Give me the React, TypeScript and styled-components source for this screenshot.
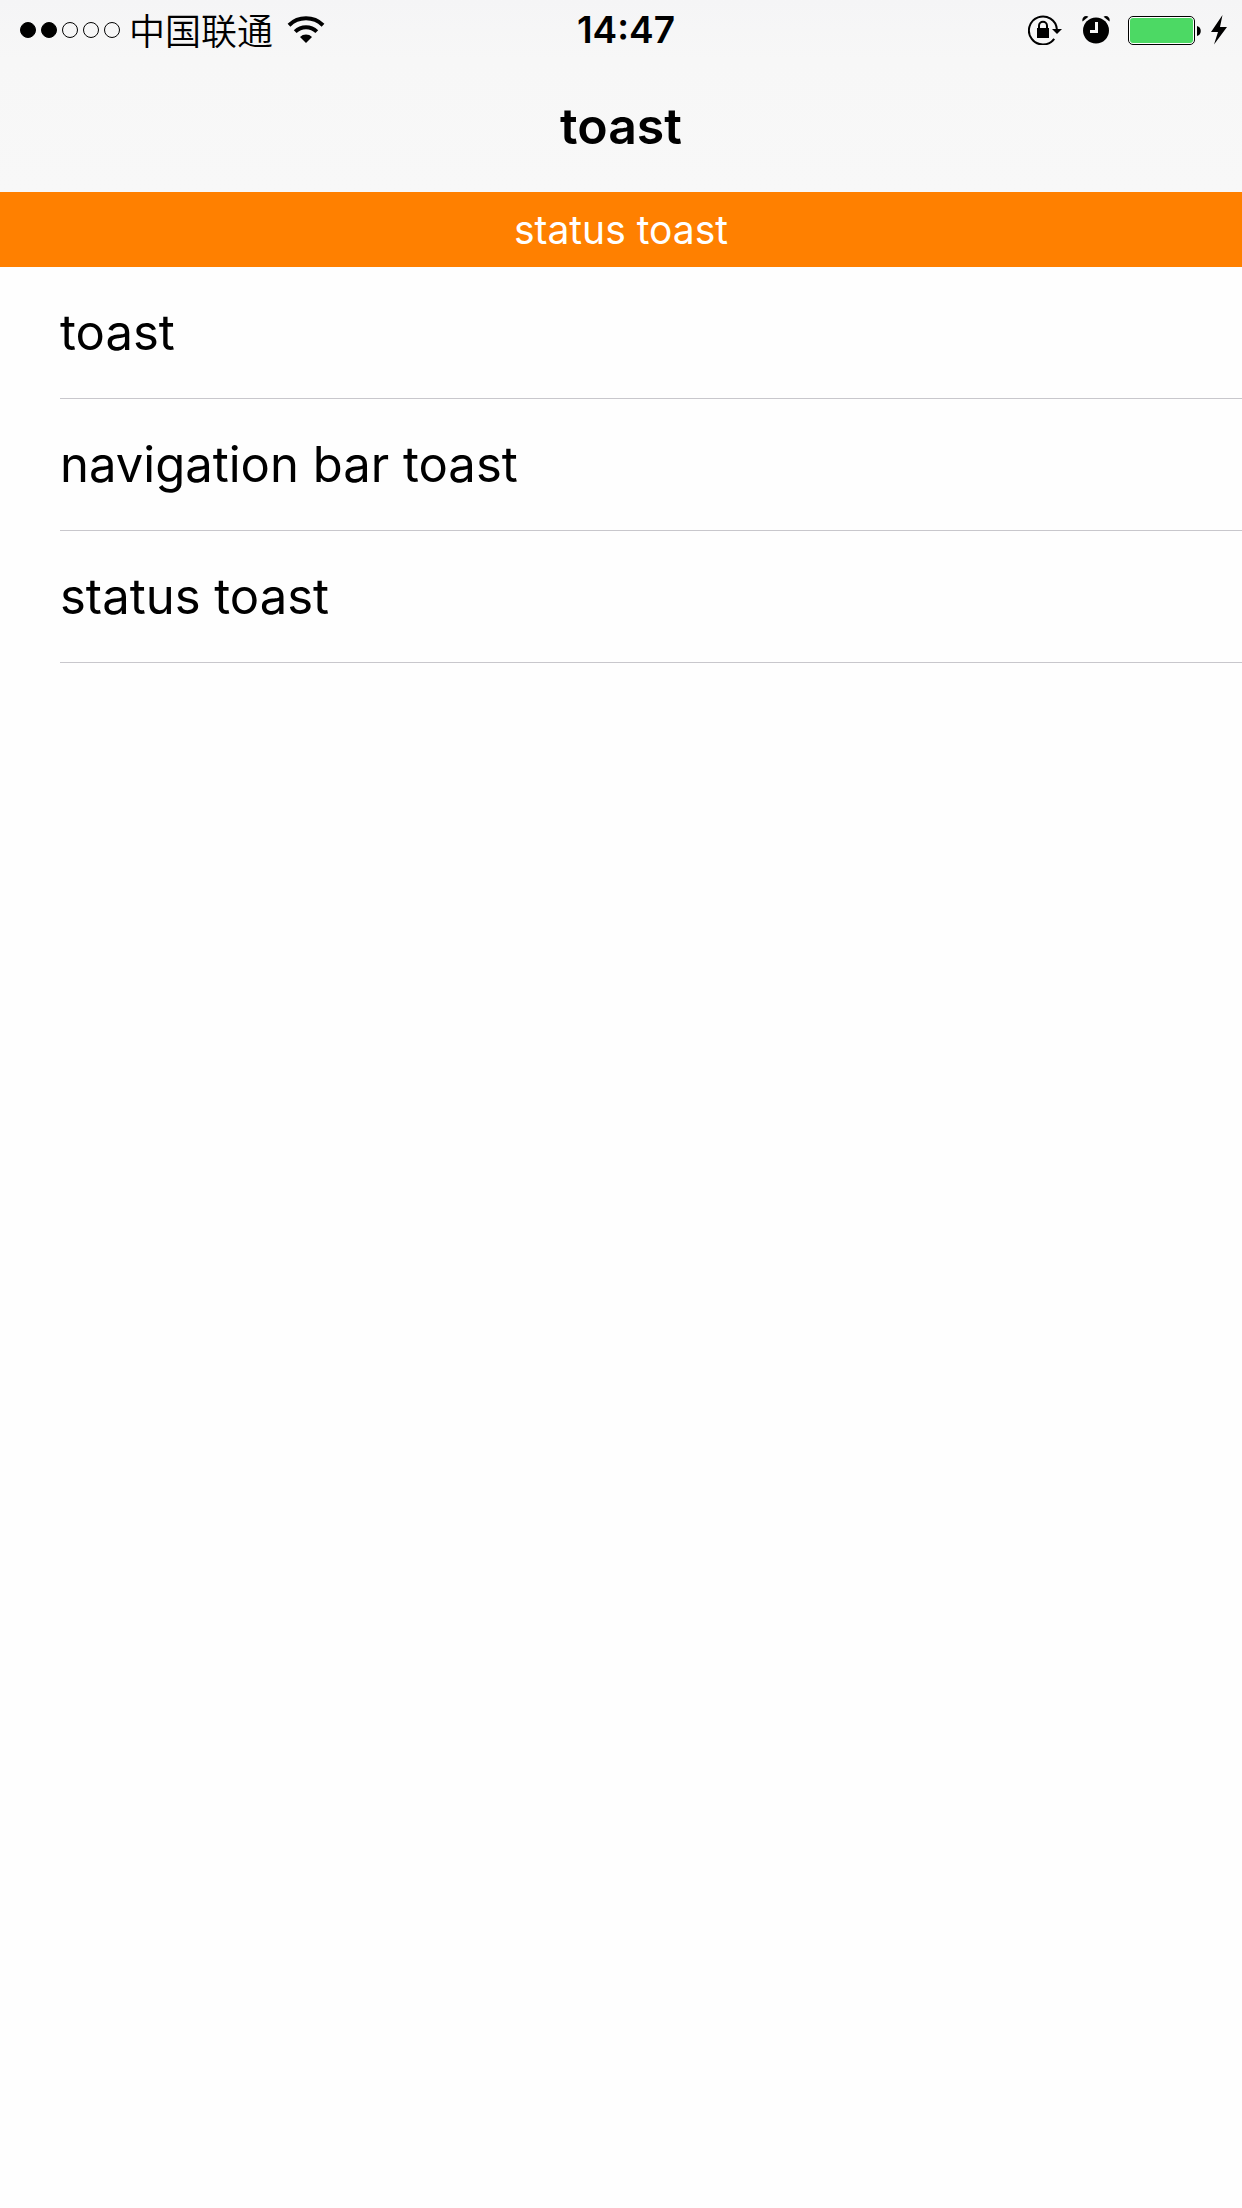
import React from "react";
import styled, { createGlobalStyle } from "styled-components";

const GlobalStyle = createGlobalStyle`
  *, *::before, *::after { box-sizing: border-box; }
  body {
    margin: 0;
    background: #fefefe;
    color: #000;
    font-family: Inter, "Noto Sans CJK SC", sans-serif;
  }
`;

const Header = styled.header`
  background: linear-gradient(#f5f5f6, #f7f7f7 60px, #f8f8f8);
`;

const StatusBar = styled.div`
  display: grid;
  grid-template-columns: 1fr auto 1fr;
  align-items: center;
  height: 60px;
  padding: 0 10px 0 20px;
`;

const StatusGroup = styled.div<{ $end?: boolean }>`
  display: flex;
  align-items: center;
  justify-content: ${(p) => (p.$end ? "flex-end" : "flex-start")};
`;

const Signal = styled.div`
  display: flex;
  gap: 5px;
  margin-right: 9px;
`;

const Dot = styled.span<{ $filled: boolean }>`
  width: 16px;
  height: 16px;
  border: 1px solid #000;
  border-radius: 50%;
  background: ${(p) => (p.$filled ? "#000" : "transparent")};
`;

const Carrier = styled.span`
  font-family: "Noto Sans CJK SC", sans-serif;
  font-size: 36px;
  font-weight: 350;
  line-height: 58px;
  height: 60px;
  margin-right: 14px;
`;

const Clock = styled.time`
  font-size: 37px;
  font-weight: 600;
  line-height: 60px;
`;

const Icon = styled.svg<{ $gap?: number }>`
  display: block;
  flex: none;
  margin-right: ${(p) => p.$gap ?? 0}px;
`;

const Title = styled.h1`
  margin: 0;
  height: 132px;
  font-size: 50px;
  font-weight: 600;
  line-height: 132px;
  text-align: center;
`;

const Toast = styled.div`
  height: 75px;
  background: #ff8000;
  color: #fff;
  font-size: 39px;
  line-height: 75px;
  text-align: center;
`;

const List = styled.ul`
  margin: 0;
  padding: 0 0 0 60px;
  list-style: none;
`;

const Row = styled.li`
  border-bottom: 1px solid #c8c7cc;
`;

const RowButton = styled.button`
  display: block;
  width: 100%;
  height: 131px;
  padding: 0;
  border: 0;
  background: none;
  color: inherit;
  font-family: inherit;
  font-size: 49px;
  line-height: 131px;
  text-align: left;
`;

const actions = ["toast", "navigation bar toast", "status toast"];

const WifiIcon = () => (
  <Icon width="38" height="28" viewBox="0 0 38 28" aria-label="Wi-Fi">
    <g fill="none" stroke="#000" strokeWidth="4">
      <path d="M2 9.2A24.5 24.5 0 0 1 36 9.2" />
      <path d="M8.2 15.6A15.6 15.6 0 0 1 29.8 15.6" />
    </g>
    <path d="M13 21A8.6 8.6 0 0 1 25 21L19 27Z" />
  </Icon>
);

const LockIcon = () => (
  <Icon width="34" height="30" viewBox="0 0 34 30" $gap={20} aria-label="Rotation lock">
    <path
      d="M26.2 23.8A14 14 0 1 1 28.9 14.5"
      fill="none"
      stroke="#000"
      strokeWidth="2"
    />
    <path d="M24 14H34L29 19Z" />
    <rect x="9" y="13" width="12" height="10" />
    <path d="M11 14V10.8A4 4 0 0 1 19 10.8V14" fill="none" stroke="#000" strokeWidth="2" />
  </Icon>
);

const AlarmIcon = () => (
  <Icon width="28" height="28" viewBox="0 0 28 28" $gap={18} aria-label="Alarm">
    <circle cx="14" cy="14.5" r="13" />
    <path d="M.6 5.6C-.4 3 1.4 0 4.2 0Q5.5 0 6.4.8Z" />
    <path d="M27.4 5.6C28.4 3 26.6 0 23.8 0Q22.5 0 21.6.8Z" />
    <path d="M14.5 6V15.5H8" fill="none" stroke="#f6f6f6" strokeWidth="3" />
  </Icon>
);

const BatteryIcon = () => (
  <Icon width="73" height="30" viewBox="0 0 73 30" $gap={7} aria-label="Battery">
    <rect x=".5" y="1.5" width="66" height="28" rx="4.5" fill="#fff" stroke="#000" />
    <rect x="2" y="3" width="63" height="25" rx="3" fill="#4cd964" />
    <path d="M69 11C74 12 74 20 69 21Z" />
  </Icon>
);

const BoltIcon = () => (
  <Icon width="24" height="30" viewBox="0 0 24 30" aria-label="Charging">
    <path d="M14.5 0L3 17H10L6 29.5L19 12H12Z" />
  </Icon>
);

export default function App() {
  return (
    <>
      <GlobalStyle />
      <Header>
        <StatusBar>
          <StatusGroup>
            <Signal>
              {[true, true, false, false, false].map((filled, i) => (
                <Dot key={i} $filled={filled} />
              ))}
            </Signal>
            <Carrier lang="zh">中国联通</Carrier>
            <WifiIcon />
          </StatusGroup>
          <Clock>14:47</Clock>
          <StatusGroup $end>
            <LockIcon />
            <AlarmIcon />
            <BatteryIcon />
            <BoltIcon />
          </StatusGroup>
        </StatusBar>
        <Title>toast</Title>
      </Header>
      <Toast role="status">status toast</Toast>
      <main>
        <List>
          {actions.map((label) => (
            <Row key={label}>
              <RowButton type="button">{label}</RowButton>
            </Row>
          ))}
        </List>
      </main>
    </>
  );
}
